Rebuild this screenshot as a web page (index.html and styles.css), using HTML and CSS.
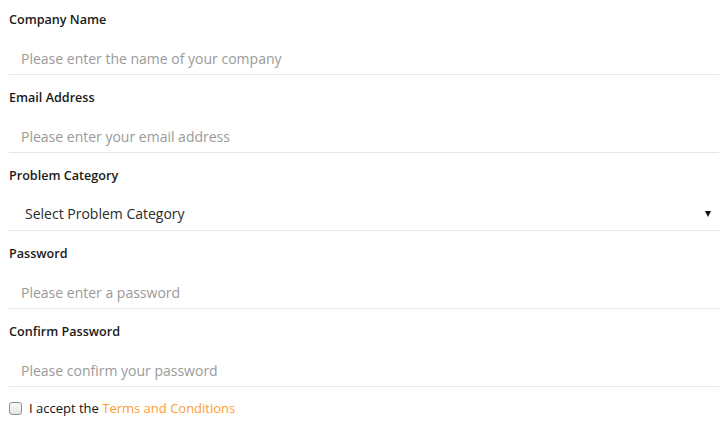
FILE: index.html
```html
<!DOCTYPE html>
<html>
<head>
<meta charset="utf-8">
<link rel="stylesheet" href="styles.css">
</head>
<body>
<form class="form">
  <div class="field">
    <label class="label">Company Name</label>
    <input class="input" type="text" placeholder="Please enter the name of your company">
  </div>
  <div class="field">
    <label class="label">Email Address</label>
    <input class="input" type="text" placeholder="Please enter your email address">
  </div>
  <div class="field">
    <label class="label">Problem Category</label>
    <div class="select">
      <span class="select-text">Select Problem Category</span>
      <span class="arrow"></span>
    </div>
  </div>
  <div class="field">
    <label class="label">Password</label>
    <input class="input" type="password" placeholder="Please enter a password">
  </div>
  <div class="field">
    <label class="label">Confirm Password</label>
    <input class="input" type="password" placeholder="Please confirm your password">
  </div>
  <div class="accept">
    <span class="box"></span>
    <span class="accept-text">I accept the <a class="link" href="#">Terms and Conditions</a></span>
  </div>
</form>
</body>
</html>
```
FILE: styles.css
```css
html, body {
  margin: 0;
  padding: 0;
  background: #fff;
}
body {
  font-family: "Open Sans", "Noto Sans", sans-serif;
  color: #222;
}
.form {
  display: flex;
  flex-direction: column;
  gap: 10px;
  padding: 7px 5px 0 9px;
}
.field {
  display: flex;
  flex-direction: column;
}
.label {
  font-size: 12.6px;
  font-weight: 600;
  line-height: 24px;
  padding-top: 1px;
  color: #1a1a1a;
}
.input, .select {
  box-sizing: border-box;
  height: 43px;
  border: none;
  border-bottom: 1px solid #e6e6e6;
  padding: 16px 12px 6px;
  font-family: "Open Sans", "Noto Sans", sans-serif;
  font-size: 14px;
  line-height: 20px;
  color: #333;
  outline: none;
  background: #fff;
  margin: 0;
  width: 100%;
}
.input::placeholder {
  color: #9a9a9a;
}
.select {
  display: flex;
  justify-content: space-between;
  align-items: center;
  padding: 10px 8px 0 16px;
}
.select-text {
  color: #2a2a2a;
}
.arrow {
  width: 0;
  height: 0;
  border-left: 3.5px solid transparent;
  border-right: 3.5px solid transparent;
  border-top: 6px solid #111;
}
.accept {
  display: flex;
  align-items: center;
  gap: 7px;
  margin-top: 0;
  height: 22px;
}
.box {
  box-sizing: border-box;
  width: 13px;
  height: 13px;
  border: 1px solid #8f8f8f;
  border-radius: 3px;
  background: linear-gradient(#fcfcfc, #e4e4e4);
}
.accept-text {
  font-size: 13px;
  font-weight: 500;
  color: #111;
}
.link {
  color: #ff9b33;
  text-decoration: none;
}
```
